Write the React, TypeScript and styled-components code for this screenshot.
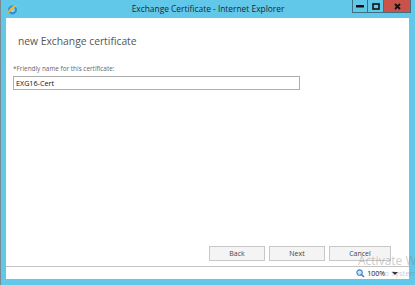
import styled, { createGlobalStyle } from "styled-components";

const Global = createGlobalStyle`
  html, body {
    margin: 0;
    padding: 0;
    overflow: hidden;
  }
  body {
    font-family: "Open Sans", "Noto Sans", sans-serif;
  }
`

const Window = styled.div`
  background: #62c8ea;
  border-left: 1px solid #7a8a90;
  box-sizing: border-box;
  display: flex;
  flex-direction: column;
  height: 285px;
  position: relative;
  width: 415px;
  overflow: hidden;
`
const TitleBar = styled.div`
  align-items: flex-start;
  display: flex;
  height: 18px;
  position: relative;
`
const Title = styled.div`
  color: #1a2a30;
  font-size: 8.4px;
  left: 0;
  line-height: 16px;
  position: absolute;
  right: 0;
  text-align: center;
  top: 1px;
`
const AppIcon = styled.svg`
  margin: 3px 0 0 5px;
`
const Caption = styled.div`
  display: flex;
  margin-left: auto;
  margin-right: 4px;
  position: relative;
  z-index: 1;
`
const CaptionButton = styled.div<{ $close?: boolean }>`
  align-items: center;
  background: ${p => (p.$close ? "#c9524a" : "transparent")};
  border: 1px solid #3e6f80;
  border-top: none;
  box-sizing: border-box;
  display: flex;
  height: 13px;
  justify-content: center;
  width: ${p => (p.$close ? "27px" : "16px")};
  & + & {
    border-left: none;
  }
`
const Body = styled.div`
  background: #fff;
  display: flex;
  flex: 1;
  flex-direction: column;
  margin: 0 6px 0 5px;
`
const Heading = styled.h1`
  color: #555;
  font-size: 10.3px;
  font-weight: 400;
  margin: 16px 0 0 12px;
`
const Form = styled.div`
  display: flex;
  flex-direction: column;
  gap: 3px;
  margin: 16px 0 0 7px;
`
const Label = styled.label`
  color: #666;
  font-size: 6.4px;
`
const Input = styled.div`
  border: 1px solid #adadad;
  color: #111;
  font-size: 7.2px;
  height: 12px;
  line-height: 12px;
  padding-left: 2px;
  width: 283px;
`
const Footer = styled.div`
  display: flex;
  gap: 4px;
  justify-content: flex-end;
  margin-top: auto;
  padding: 0 18px 5px 0;
`
const Button = styled.button<{ $wide?: boolean }>`
  background: #f4f4f4;
  border: 1px solid #c8c8c8;
  color: #444;
  font-family: "Open Sans", "Noto Sans", sans-serif;
  font-size: 7px;
  height: 15px;
  padding: 0;
  width: ${p => (p.$wide ? "62px" : "56px")};
`
const StatusBar = styled.div`
  align-items: center;
  background: #fff;
  border-top: 1px solid #c3c3c3;
  display: flex;
  height: 12px;
  justify-content: flex-end;
  margin: 0 6px 0 5px;
  padding-right: 10px;
  font-size: 7px;
  color: #222;
  gap: 2px;
`
const BottomEdge = styled.div`
  height: 6px;
`
const Watermark = styled.div`
  color: rgba(120, 120, 120, 0.4);
  font-size: 12px;
  left: 357px;
  line-height: 14px;
  position: absolute;
  top: 254px;
  white-space: nowrap;
`
const WatermarkSmall = styled.div`
  font-size: 7.5px;
  line-height: 10px;
  padding-left: 12px;
`

export default function App() {
  return (
    <>
      <Global />
      <Window>
        <TitleBar>
          <AppIcon width="13" height="13" viewBox="0 0 16 16">
            <circle cx="8" cy="8.5" r="5.5" fill="#2d8fd8" />
            <circle cx="8" cy="8.5" r="3" fill="#8fd0f5" />
            <path d="M1.5 13 C4 6, 10 2, 15 2.5 C12 4, 8 8, 3 12.5 Z" fill="#f1b92a" />
          </AppIcon>
          <Title>Exchange Certificate - Internet Explorer</Title>
          <Caption>
            <CaptionButton>
              <svg width="8" height="3"><rect width="8" height="2.5" fill="#111" /></svg>
            </CaptionButton>
            <CaptionButton>
              <svg width="8" height="7"><rect x="1" y="1" width="6" height="5" fill="none" stroke="#111" strokeWidth="1.6" /></svg>
            </CaptionButton>
            <CaptionButton $close>
              <svg width="7" height="7"><path d="M1 1 L6 6 M6 1 L1 6" stroke="#111" strokeWidth="1.8" /></svg>
            </CaptionButton>
          </Caption>
        </TitleBar>
        <Body>
          <Heading>new Exchange certificate</Heading>
          <Form>
            <Label>*Friendly name for this certificate:</Label>
            <Input>EXG16-Cert</Input>
          </Form>
          <Footer>
            <Button>Back</Button>
            <Button>Next</Button>
            <Button $wide>Cancel</Button>
          </Footer>
        </Body>
        <StatusBar>
          <svg width="9" height="9" viewBox="0 0 10 10">
            <circle cx="4" cy="4" r="3" fill="#cfe6f7" stroke="#3b7fc4" strokeWidth="1.2" />
            <path d="M6 6 L9 9" stroke="#3b7fc4" strokeWidth="1.6" />
          </svg>
          <span>100%</span>
          <svg width="8" height="6" viewBox="0 0 8 6" style={{ marginLeft: 4 }}>
            <path d="M1 2 L7 2 L4 5 Z" fill="#333" />
          </svg>
        </StatusBar>
        <BottomEdge />
        <Watermark>
          Activate W
          <WatermarkSmall>Go to System</WatermarkSmall>
        </Watermark>
      </Window>
    </>
  )
}
